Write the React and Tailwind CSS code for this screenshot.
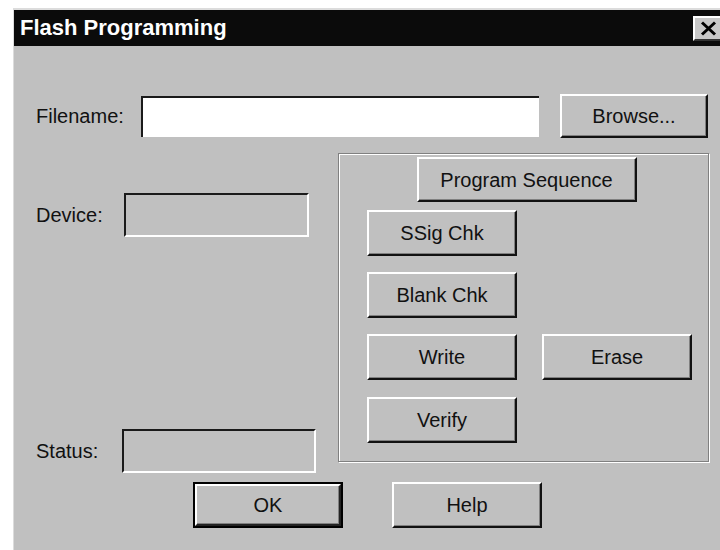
import React from "react";

const font = { fontFamily: '"Liberation Sans", Arial, sans-serif' };

// raised Win95 style push button
function Btn({ children, className = "", isDefault = false }) {
  if (isDefault) {
    return (
      <div className={`border-2 border-black bg-[#c0c0c0] ${className}`}>
        <div className="w-full h-full flex items-center justify-center border-2 border-t-white border-l-white border-b-[#222] border-r-[#222] shadow-[inset_-1px_-1px_0_#808080] text-[20px] text-[#111]">
          {children}
        </div>
      </div>
    );
  }
  return (
    <div
      className={`flex items-center justify-center bg-[#c0c0c0] border-2 border-t-white border-l-white border-b-[#111] border-r-[#111] shadow-[inset_-1px_-1px_0_#808080] text-[20px] text-[#111] ${className}`}
    >
      {children}
    </div>
  );
}

function Sunken({ className = "" }) {
  return (
    <div
      className={`border-2 border-t-[#1a1a1a] border-l-[#1a1a1a] border-b-white border-r-white ${className}`}
    />
  );
}

export default function App() {
  return (
    <div className="w-[720px] h-[550px] overflow-hidden bg-white" style={font}>
      <div className="ml-[13px] mt-[8px] w-[712px] h-[600px] bg-[#c0c0c0] border-t-2 border-l border-[#dcdcdc]">
        {/* title bar */}
        <div className="h-[36px] bg-[#0b0b0b] flex items-center pl-[6px]">
          <span className="text-white font-bold text-[22px] leading-none">Flash Programming</span>
          {/* close box runs off the right edge in the screenshot */}
          <div className="ml-auto w-[32px] h-[25px] bg-[#c8c8c8] border-2 border-t-white border-l-white border-b-[#333] border-r-[#333] flex items-center pl-[5px]">
            <svg width="17" height="15" viewBox="0 0 17 15">
              <path d="M2 1.5 L15 13.5 M15 1.5 L2 13.5" stroke="#000" strokeWidth="3" />
            </svg>
          </div>
        </div>

        {/* body */}
        <div className="pl-[22px]">
          {/* filename row */}
          <div className="mt-[48px] flex items-center h-[44px]">
            <span className="w-[105px] text-[20px] text-[#111]">Filename:</span>
            <div className="w-[398px] h-[41px] bg-white border-t-2 border-l-2 border-[#1a1a1a]" />
            <Btn className="ml-[21px] w-[148px] h-[44px]">Browse...</Btn>
          </div>

          <div className="mt-[15px] flex items-start">
            {/* left column */}
            <div className="w-[302px] flex flex-col">
              <div className="mt-[40px] flex items-center h-[44px]">
                <span className="w-[88px] text-[20px] text-[#111]">Device:</span>
                <Sunken className="w-[185px] h-[44px]" />
              </div>
              <div className="mt-[192px] flex items-center h-[44px]">
                <span className="w-[86px] text-[20px] text-[#111]">Status:</span>
                <Sunken className="w-[194px] h-[44px]" />
              </div>
            </div>

            {/* program sequence group */}
            <div className="w-[371px] h-[309px] border border-[#808080] shadow-[inset_1px_1px_0_#fff,1px_1px_0_#fff]">
              <div className="flex justify-center mt-[3px] pl-[6px]">
                <Btn className="w-[220px] h-[45px]">Program Sequence</Btn>
              </div>
              <div className="pl-[28px] flex flex-col">
                <Btn className="mt-[8px] w-[150px] h-[46px]">SSig Chk</Btn>
                <Btn className="mt-[16px] w-[150px] h-[46px]">Blank Chk</Btn>
                <div className="mt-[16px] flex">
                  <Btn className="w-[150px] h-[46px]">Write</Btn>
                  <Btn className="ml-[25px] w-[150px] h-[46px]">Erase</Btn>
                </div>
                <Btn className="mt-[17px] w-[150px] h-[46px]">Verify</Btn>
              </div>
            </div>
          </div>

          {/* bottom buttons */}
          <div className="mt-[9px] flex">
            <Btn isDefault className="ml-[157px] w-[150px] h-[46px]">OK</Btn>
            <Btn className="ml-[49px] w-[150px] h-[46px]">Help</Btn>
          </div>
        </div>
      </div>
    </div>
  );
}
